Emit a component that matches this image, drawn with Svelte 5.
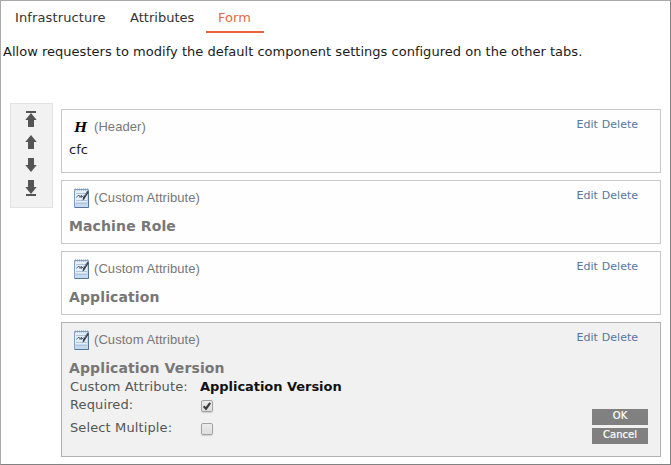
<script>
  const cards = [
    { kind: 'Header', title: 'cfc', header: true },
    { kind: 'Custom Attribute', title: 'Machine Role' },
    { kind: 'Custom Attribute', title: 'Application' },
    { kind: 'Custom Attribute', title: 'Application Version', active: true }
  ];
  let required = $state(true);
  let multiple = $state(false);
</script>

{#snippet arrow(down, bar)}
  <button class="move" aria-label={down ? 'Move down' : 'Move up'}>
    <svg width="12" height="16" viewBox="0 0 12 16">
      <g transform={down ? 'rotate(180 6 8)' : undefined}>
        {#if bar}<path d="M1 0h10v2H1z" />{/if}
        <path d="M6 2L11.7 9H9v7H3V9H.3z" transform={bar ? undefined : 'translate(0 -1)'} />
      </g>
    </svg>
  </button>
{/snippet}

{#snippet check(on, toggle, label)}
  <button class="check" role="checkbox" aria-checked={on} aria-label={label} onclick={toggle}>
    {#if on}
      <svg width="10" height="10" viewBox="0 0 10 10"><path d="M1.7 5.3L4 7.7L8.2 1.8" fill="none" stroke="#3d3d3d" stroke-width="2.2" /></svg>
    {/if}
  </button>
{/snippet}

<main>
  <nav>
    <span class="tab t1">Infrastructure</span>
    <span class="tab t2">Attributes</span>
    <span class="tab t3 on">Form</span>
  </nav>
  <p class="intro">Allow requesters to modify the default component settings configured on the other tabs.</p>

  <div class="body">
    <aside>
      {@render arrow(false, true)}
      {@render arrow(false, false)}
      {@render arrow(true, false)}
      {@render arrow(true, true)}
    </aside>

    <div class="cards">
      {#each cards as card}
        <section class:active={card.active} class:header={card.header}>
          <div class="content">
            <div class="kind">
              {#if card.header}
                <span class="h"><span>H</span></span>
              {:else}
                <svg class="note" width="16" height="20" viewBox="0 0 16 20">
                  <path d="M.5 1.5h14v18H.5z" fill="#c5d9ef" stroke="#829fc2" />
                  <path d="M1 2h12v12H1z" fill="#e5effa" />
                  <path d="M14.5 3v16.5H1" fill="none" stroke="#55779f" />
                  <path d="M1 1.5h13" stroke="#7d9ac0" stroke-width="2" stroke-dasharray="1 1" />
                  <path d="M2 5.5h10M2 12.5h11M2 15.5h11" stroke="#adc4de" />
                  <path d="M2.5 9.5L4 7.5h1.5l.5 2L7.5 7v2.500L9.500 7.500" fill="none" stroke="#59677a" />
                  <path d="M9.500 10.500L14 3.500" stroke="#303740" stroke-width="2" />
                  <path d="M10.500 8L13 4.200" stroke="#a9a39a" stroke-width=".7" />
                  <path d="M8.500 12.500l.5-2.500 1.600 1z" fill="#222" />
                </svg>
              {/if}
              <span class="label">({card.kind})</span>
            </div>
            <div class="title">{card.title}</div>
            {#if card.active}
              <div class="row r1"><span class="name">Custom Attribute:</span><b>Application Version</b></div>
              <div class="row r2"><span class="name">Required:</span>{@render check(required, () => (required = !required), 'Required')}</div>
              <div class="row r3"><span class="name">Select Multiple:</span>{@render check(multiple, () => (multiple = !multiple), 'Select Multiple')}</div>
            {/if}
          </div>
          <div class="side">
            <div class="links"><span>Edit</span><span>Delete</span></div>
            {#if card.active}
              <div class="buttons"><button>OK</button><button>Cancel</button></div>
            {/if}
          </div>
        </section>
      {/each}
    </div>
  </div>
</main>

<style>
  main {
    box-sizing: border-box;
    width: 671px;
    height: 465px;
    overflow: hidden;
    border: 1px solid #a8a8a8;
    border-right-color: #828282;
    border-bottom-color: #828282;
    background: #fff;
    color: #1b1b1b;
    font: 13px/18px Verdana, 'DejaVu Sans', sans-serif;
    white-space: nowrap;
  }
  nav { display: flex; height: 32px; padding-left: 2px; }
  .tab {
    box-sizing: border-box;
    height: 32px;
    padding: 8px 12px 0;
    font-size: 13px;
    color: #333;
  }
  .t1 { width: 115px; letter-spacing: .12px; }
  .t2 { width: 88px; letter-spacing: .02px; }
  .t3 { width: 58px; letter-spacing: .05px; }
  .on { color: #e56b43; border-bottom: 2px solid #ed6338; }
  .intro { margin: 10px 0 0 2px; height: 18px; letter-spacing: .02px; }
  .body { display: flex; align-items: flex-start; gap: 8px; padding: 42px 0 0 9px; }
  aside {
    box-sizing: border-box;
    width: 43px;
    height: 105px;
    padding: 7px 1px 0 0;
    border: 1px solid #e3e3e3;
    background: #f2f2f2;
    display: flex;
    flex-direction: column;
    align-items: center;
    gap: 7px;
  }
  button { border: 0; margin: 0; padding: 0; }
  .move { display: block; width: 12px; height: 16px; background: none; fill: #555; }
  .move svg { display: block; }
  .cards { display: flex; flex-direction: column; gap: 7px; padding-top: 6px; }
  section {
    box-sizing: border-box;
    display: flex;
    justify-content: space-between;
    width: 600px;
    height: 64px;
    padding: 7px 12px 0 7px;
    border: 1px solid #c8c8c8;
    background: #fefefe;
  }
  .active { height: 135px; background: #f1f1f1; border-color: #b2b2b2; }
  .kind {
    display: flex;
    height: 22px;
    padding-left: 5px;
    color: #777;
    font: 13px/20px Arial, 'Liberation Sans', sans-serif;
  }
  .note { margin-right: 4px; }
  .h {
    width: 20px;
    color: #000;
    font: italic bold 15px/20px 'Times New Roman', 'Liberation Serif', serif;
  }
  .h span { display: inline-block; transform: scaleX(1.12); transform-origin: left; }
  .label { letter-spacing: .06px; }
  .title { margin-top: 7px; font-size: 14px; line-height: 18px; font-weight: bold; color: #777; letter-spacing: .12px; }
  .header .title { margin-top: 2px; font-size: 13px; font-weight: normal; color: #1b1b1b; letter-spacing: 0; }
  .row { display: flex; padding-left: 1px; color: #555; letter-spacing: .12px; }
  .name { width: 130px; padding-top: 1px; }
  .row b { padding-top: 1px; color: #111; letter-spacing: -.04px; }
  .r1 { height: 18px; }
  .r2 { height: 23px; }
  .check {
    box-sizing: border-box;
    width: 12px;
    height: 12px;
    margin: 5px 0 0 1px;
    border: 1px solid #a3a3a3;
    border-radius: 2px;
    background: linear-gradient(#ececec, #dedede);
    box-shadow: 0 1px 1px #ccc;
  }
  .check svg { display: block; }
  .side { display: flex; flex-direction: column; align-items: flex-end; }
  .links { display: flex; gap: 4px; margin-right: 10px; font-size: 11px; line-height: 16px; color: #55779f; }
  .buttons { display: flex; flex-direction: column; gap: 3px; margin-top: 63px; }
  .buttons button {
    width: 56px;
    height: 16px;
    padding-bottom: 2px;
    background: #808080;
    color: #fff;
    font: 10px/14px Verdana, 'DejaVu Sans', sans-serif;
    -webkit-text-stroke: .2px #fff;
  }
</style>
